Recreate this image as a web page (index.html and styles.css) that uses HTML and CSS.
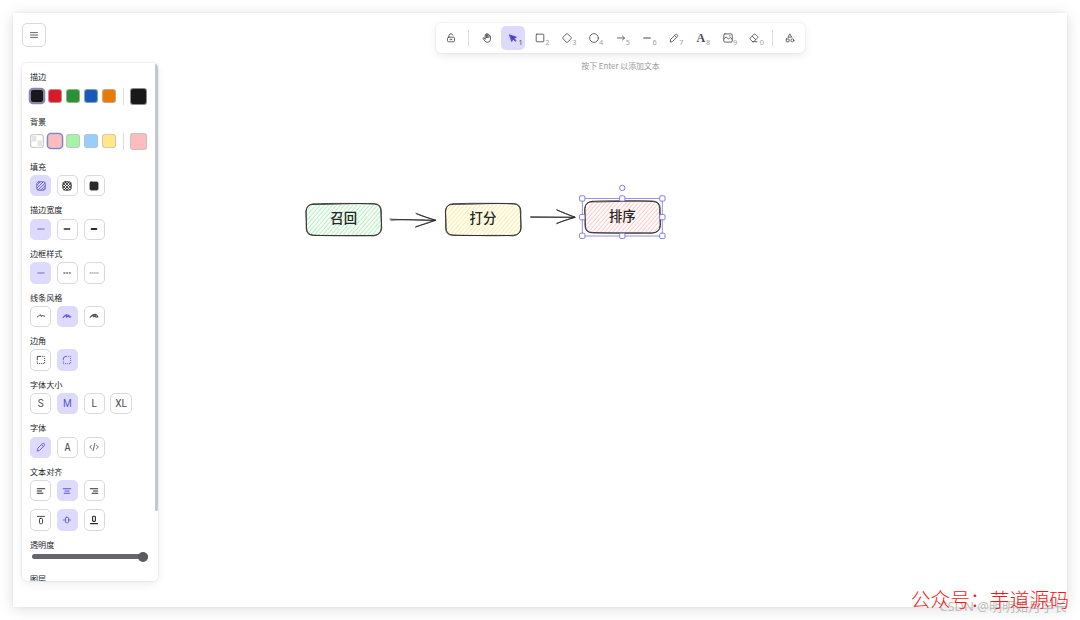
FILE: index.html
```html
<!DOCTYPE html>
<html lang="zh-CN">
<head>
    <meta charset="UTF-8">
    <meta name="viewport" content="width=device-width, initial-scale=1.0">
    <title>Whiteboard</title>
    <link rel="stylesheet" href="styles.css">
</head>
<body>
    <div class="window">
        <svg class="canvas" viewBox="13 13 1054 593">
            <defs>
                <pattern id="hatch-green" width="3.1" height="8" patternUnits="userSpaceOnUse" patternTransform="rotate(41)">
                    <path d="M1 0V8" stroke="#b2f2bb" stroke-width="1.05"/>
                </pattern>
                <pattern id="hatch-yellow" width="3.1" height="8" patternUnits="userSpaceOnUse" patternTransform="rotate(41)">
                    <path d="M1 0V8" stroke="#ffec99" stroke-width="1.05"/>
                </pattern>
                <pattern id="hatch-red" width="3.1" height="8" patternUnits="userSpaceOnUse" patternTransform="rotate(41)">
                    <path d="M1 0V8" stroke="#ffc9c9" stroke-width="1.05"/>
                </pattern>
                <g id="sketch-box">
                    <path d="M8 .8C26 -.1 52 .5 68 .5Q75.5 .6 75.7 8C75.2 14 76 20 75.5 25Q75.3 32 68 32.3C48 33.4 25 32 8 32.4Q.4 32.3 .5 25C.9 18 .2 13 .5 8Q.8 1 8 .8"/>
                    <path d="M7 1.3C24 1.8 50 -.4 69 1.1Q74.8 1.5 75.1 8L76 25Q75.5 31.5 68 32.8C50 31.6 25 33.4 8 32Q1.3 31.8 .9 25L.2 8Q1 1.5 7 1.3"/>
                </g>
            </defs>

            <rect x="307" y="205" width="74" height="30" rx="7" fill="url(#hatch-green)"/>
            <use href="#sketch-box" x="305.7" y="203.1" class="sketch"/>
            <text x="343.7" y="223.4" class="node-text">召回</text>

            <g class="sketch">
                <path d="M390 219.1C405 220.2 420 219.3 435.5 220.5M391 220.2C408 218.9 420 220.8 435 220.2"/>
                <path d="M416 213.4C422 216 429 217.7 435.5 220.5C429 222 422 224.5 415.5 227.2M417 214C424 217 430 218.6 435.8 220C429 223 422 225 416 226.6"/>
            </g>

            <rect x="446" y="205" width="74" height="30" rx="7" fill="url(#hatch-yellow)"/>
            <use href="#sketch-box" x="445.2" y="203" class="sketch"/>
            <text x="483" y="223.4" class="node-text">打分</text>

            <g class="sketch">
                <path d="M530.5 216.8L575 217.4M531 217.3L574.5 217.2"/>
                <path d="M556.5 209.7C562 212.5 569 215 575.3 217.4C569 218.7 562 221 556.7 223.7M557.5 210.3L575 217.2L557 223.2"/>
            </g>

            <rect x="586" y="202" width="74" height="30" rx="7" fill="url(#hatch-red)"/>
            <use href="#sketch-box" x="584.5" y="200.5" class="sketch"/>
            <text x="622.3" y="221.2" class="node-text">排序</text>

            <g class="selection">
                <rect x="582.3" y="198.5" width="80" height="37.5"/>
                <rect class="handle" x="579.6" y="195.8" width="5.3" height="5.3" rx="1.2"/>
                <rect class="handle" x="619.6" y="195.8" width="5.3" height="5.3" rx="1.2"/>
                <rect class="handle" x="659.7" y="195.8" width="5.3" height="5.3" rx="1.2"/>
                <rect class="handle" x="579.6" y="214.5" width="5.3" height="5.3" rx="1.2"/>
                <rect class="handle" x="659.7" y="214.5" width="5.3" height="5.3" rx="1.2"/>
                <rect class="handle" x="579.6" y="233.2" width="5.3" height="5.3" rx="1.2"/>
                <rect class="handle" x="619.6" y="233.2" width="5.3" height="5.3" rx="1.2"/>
                <rect class="handle" x="659.7" y="233.2" width="5.3" height="5.3" rx="1.2"/>
                <circle class="handle" cx="622.3" cy="187.9" r="2.7"/>
            </g>
        </svg>

        <aside class="sidebar">
            <button class="menu-button">
                <svg class="icon" viewBox="0 0 12 12"><path d="M2.5 3.6H9.5M2.5 6H9.5M2.5 8.4H9.5"/></svg>
            </button>

            <div class="panel">
                <section>
                    <h3>描边</h3>
                    <div class="colors">
                        <span class="swatch black active"></span>
                        <span class="swatch red"></span>
                        <span class="swatch green"></span>
                        <span class="swatch blue"></span>
                        <span class="swatch orange"></span>
                        <span class="color-divider"></span>
                        <span class="swatch big black"></span>
                    </div>
                </section>
                <section>
                    <h3>背景</h3>
                    <div class="colors">
                        <span class="swatch transparent"></span>
                        <span class="swatch pink active"></span>
                        <span class="swatch light-green"></span>
                        <span class="swatch light-blue"></span>
                        <span class="swatch yellow"></span>
                        <span class="color-divider"></span>
                        <span class="swatch big pink"></span>
                    </div>
                </section>
                <section>
                    <h3>填充</h3>
                    <div class="options">
                        <button class="active"><svg class="icon" viewBox="0 0 12 12"><rect x="1.8" y="1.8" width="8.4" height="8.4" rx="2"/><path d="M2 5.2L5.2 2M2 8L8 2M3 10L10 3M5.8 10L10 5.8M8.2 10L10 8.2"/></svg></button>
                        <button><svg class="icon dark" viewBox="0 0 12 12"><rect x="1.8" y="1.8" width="8.4" height="8.4" rx="2.4"/><path d="M2 5.2L5.2 2M2 8L8 2M3 10L10 3M5.8 10L10 5.8M6.8 2L10 5.2M4 2L10 8M2 3L9 10M2 5.8L6.2 10"/></svg></button>
                        <button><svg class="icon dark" viewBox="0 0 12 12"><rect class="solid" x="2" y="2" width="8" height="8" rx="1"/></svg></button>
                    </div>
                </section>
                <section>
                    <h3>描边宽度</h3>
                    <div class="options">
                        <button class="active"><svg class="icon" viewBox="0 0 12 12"><path d="M2.8 6H9.2"/></svg></button>
                        <button><svg class="icon dark" viewBox="0 0 12 12"><path class="medium" d="M3.3 6H8.7"/></svg></button>
                        <button><svg class="icon dark" viewBox="0 0 12 12"><path class="thick" d="M3.6 6H8.4"/></svg></button>
                    </div>
                </section>
                <section>
                    <h3>边框样式</h3>
                    <div class="options">
                        <button class="active"><svg class="icon" viewBox="0 0 12 12"><path d="M2.8 6H9.2"/></svg></button>
                        <button><svg class="icon dark" viewBox="0 0 12 12"><path class="dashed" d="M2.4 6H9.8"/></svg></button>
                        <button><svg class="icon dark" viewBox="0 0 12 12"><path class="dotted" d="M1.8 6H10.4"/></svg></button>
                    </div>
                </section>
                <section>
                    <h3>线条风格</h3>
                    <div class="options">
                        <button><svg class="icon dark" viewBox="0 0 12 12"><path d="M2.2 7Q5 4.6 5.9 4.9Q6.2 5.3 5.7 6.1Q6.2 6.9 7.8 5.5Q8.4 6 9.8 6.2"/></svg></button>
                        <button class="active"><svg class="icon" viewBox="0 0 12 12"><path class="rough" d="M2.2 7.3Q5.3 4.2 6 4.7Q6.2 5.3 5.3 7Q6 7.5 8 5.2Q7.8 6.9 8.4 7.2L9.9 6.8"/></svg></button>
                        <button><svg class="icon" viewBox="0 0 12 12"><path class="rough" d="M2.2 7.2Q5 4 7.2 4.4Q9.4 4.8 9.8 7M4.6 5.8L6 5.5L5.7 6.8L7.5 5.8L7.9 7.2L9.8 7"/></svg></button>
                    </div>
                </section>
                <section>
                    <h3>边角</h3>
                    <div class="options">
                        <button><svg class="icon dark" viewBox="0 0 12 12"><path d="M2.3 5.8V2.4H5.8"/><path class="dots" d="M7.6 2.4H9.6V9.6H2.3V7.4"/></svg></button>
                        <button class="active"><svg class="icon" viewBox="0 0 12 12"><path d="M2.3 5.8V5Q2.3 2.4 5 2.4H5.8"/><path class="dots" d="M7.6 2.4H9.6V9.6H2.3V7.4"/></svg></button>
                    </div>
                </section>
                <section>
                    <h3>字体大小</h3>
                    <div class="options">
                        <button>S</button>
                        <button class="active">M</button>
                        <button>L</button>
                        <button>XL</button>
                    </div>
                </section>
                <section>
                    <h3>字体</h3>
                    <div class="options">
                        <button class="active"><svg class="icon" viewBox="0 0 12 12"><path d="M2.3 9.8L2.7 7.4L7.3 2.7Q8.3 1.8 9.2 2.7Q10.1 3.6 9.2 4.6L4.6 9.3ZM6.6 3.5L8.5 5.4"/></svg></button>
                        <button class="font-a">A</button>
                        <button><svg class="icon" viewBox="0 0 12 12"><path d="M3.5 4.3L1.7 6L3.5 7.8M8.5 4.3L10.3 6L8.5 7.8M6.9 2.4L5.1 9.6"/></svg></button>
                    </div>
                </section>
                <section>
                    <h3>文本对齐</h3>
                    <div class="options">
                        <button><svg class="icon dark" viewBox="0 0 12 12"><path class="line" d="M2.3 3.8H9.7M2.3 6H6.5M2.3 8.2H7.9"/></svg></button>
                        <button class="active"><svg class="icon" viewBox="0 0 12 12"><path class="line" d="M2.3 3.8H9.7M4 6H8M3.2 8.2H8.8"/></svg></button>
                        <button><svg class="icon dark" viewBox="0 0 12 12"><path class="line" d="M2.3 3.8H9.7M5.5 6H9.7M4.1 8.2H9.7"/></svg></button>
                    </div>
                    <div class="options">
                        <button><svg class="icon dark" viewBox="0 0 12 12"><path d="M2.4 2.4H9.6"/><rect x="4.5" y="4.4" width="3" height="5.2" rx=".8"/></svg></button>
                        <button class="active"><svg class="icon" viewBox="0 0 12 12"><path d="M2.3 6H4.4M7.6 6H9.7"/><rect x="4.5" y="3.3" width="3" height="5.4" rx=".8"/></svg></button>
                        <button><svg class="icon dark" viewBox="0 0 12 12"><path class="line" d="M2.4 9.6H9.6"/><rect class="line" x="4.6" y="2.2" width="2.8" height="5.2" rx=".8"/></svg></button>
                    </div>
                </section>
                <section>
                    <h3>透明度</h3>
                    <div class="slider"><span class="thumb"></span></div>
                </section>
                <section>
                    <h3>图层</h3>
                </section>
                <span class="scrollbar"></span>
            </div>
        </aside>

        <main>
            <div class="toolbar">
                <button><svg class="icon" viewBox="0 0 12 12"><rect x="2.5" y="5.2" width="7" height="4.6" rx="1.1"/><path d="M4 5.2V3.6Q4 1.8 6 1.8Q7.4 1.8 7.8 3"/><circle cx="6" cy="7.5" r=".6"/></svg></button>
                <span class="divider"></span>
                <button><svg class="icon" viewBox="0 0 12 12"><path d="M4.1 7V3.1Q4.1 2.4 4.7 2.4T5.3 3.1V5.6M5.3 5.5V2.1Q5.3 1.4 5.9 1.4T6.6 2.1V5.6M6.6 2.9Q6.7 2.2 7.3 2.2T7.9 2.9V5.8M7.9 4.1Q8 3.4 8.6 3.4T9.5 4.1V7.2Q9.5 10.3 6.8 10.3Q4.8 10.3 3.9 9.1L2.1 6.5Q2 5.6 2.9 5.7L4.1 7"/></svg></button>
                <button class="active"><svg class="icon" viewBox="0 0 12 12"><path class="solid" d="M2.7 2.9L9.4 5.2L6.9 6.3L9 8.5L8.3 9.2L6.1 7L4.9 9.3Z"/></svg><sub>1</sub></button>
                <button><svg class="icon" viewBox="0 0 12 12"><rect x="2.2" y="2.2" width="7.6" height="7.6" rx=".6"/></svg><sub>2</sub></button>
                <button><svg class="icon" viewBox="0 0 12 12"><path d="M5.4 1.9Q6 1.3 6.6 1.9L10.2 5.4Q10.7 6 10.2 6.6L6.6 10.1Q6 10.7 5.4 10.1L1.8 6.6Q1.3 6 1.8 5.4Z"/></svg><sub>3</sub></button>
                <button><svg class="icon" viewBox="0 0 12 12"><circle cx="6" cy="6" r="4.4"/></svg><sub>4</sub></button>
                <button><svg class="icon" viewBox="0 0 12 12"><path d="M2.5 6H9.4M7.4 4L9.5 6L7.4 8"/></svg><sub>5</sub></button>
                <button><svg class="icon" viewBox="0 0 12 12"><path class="line" d="M2.6 6H9.4"/></svg><sub>6</sub></button>
                <button><svg class="icon" viewBox="0 0 12 12"><path d="M2.3 9.8L2.7 7.4L7.3 2.7Q8.3 1.8 9.2 2.7Q10.1 3.6 9.2 4.6L4.6 9.3ZM6.6 3.5L8.5 5.4"/></svg><sub>7</sub></button>
                <button><span class="text-tool">A</span><sub>8</sub></button>
                <button><svg class="icon" viewBox="0 0 12 12"><rect x="1.8" y="1.9" width="8.4" height="8.2" rx="1.1"/><path d="M1.9 6.8L4.2 4.8L6.4 7.1L8.3 5.6L10.1 7.2M7.6 3.9H8"/></svg><sub>9</sub></button>
                <button><svg class="icon" viewBox="0 0 12 12"><path d="M4.5 9.6L2.1 7.2Q1.7 6.7 2.1 6.2L6.2 2.2Q6.7 1.8 7.2 2.2L9.7 4.7Q10.1 5.2 9.7 5.7L5.8 9.6ZM4.2 4.2L7.7 7.7M4.5 9.7H9"/></svg><sub>0</sub></button>
                <span class="divider"></span>
                <button><svg class="icon" viewBox="0 0 12 12"><path d="M6 2.2L7.7 5.2H4.3Z"/><rect x="2.3" y="7" width="2.8" height="2.8" rx=".3"/><circle cx="8.4" cy="8.4" r="1.5"/></svg></button>
            </div>
            <p class="hint">按下 Enter 以添加文本</p>
        </main>
    </div>

    <div class="watermark">CSDN @明明如月学长</div>
    <div class="account">公众号：芋道源码</div>
</body>
</html>
```
FILE: styles.css
```css
* {
    box-sizing: border-box;
}

body, h3, p, button {
    margin: 0;
    padding: 0;
}

body {
    height: 620px;
    padding: 13px;
    overflow: hidden;
    background-color: #fff;
    color: #1b1b1f;
    font-family: "Noto Sans", "Noto Sans CJK SC", sans-serif;
}

.window {
    position: relative;
    display: flex;
    width: 1054px;
    height: 593.5px;
    background-color: #fff;
    box-shadow: 0 0 3px rgba(0, 0, 0, 0.06), 0 2px 14px rgba(0, 0, 0, 0.13);
}

button {
    display: flex;
    align-items: center;
    justify-content: center;
    border: none;
    background-color: #fff;
    color: #4d4d52;
    font-family: inherit;
}

.icon {
    display: block;
    flex: none;
    width: 12px;
    height: 12px;
    fill: none;
    stroke: currentColor;
    stroke-width: 0.85;
    stroke-linecap: round;
    stroke-linejoin: round;
}

.icon.dark {
    color: #2b2b2f;
}

.icon .solid {
    fill: currentColor;
}

.icon .line {
    stroke-width: 1.1;
}

.icon .medium {
    stroke-width: 1.4;
}

.icon .thick {
    stroke-width: 2;
}

.icon .dashed {
    stroke-width: 1.1;
    stroke-linecap: butt;
    stroke-dasharray: 2 0.8;
}

.icon .dotted {
    stroke-linecap: butt;
    stroke-dasharray: 1 0.9;
}

.icon .rough {
    stroke-width: 1.15;
}

.icon .dots {
    stroke-dasharray: 0.3 1.7;
}

/* canvas */
.canvas {
    position: absolute;
    inset: 0;
    width: 1054px;
    height: 593px;
}

.sketch {
    fill: none;
    stroke: #2a2a2a;
    stroke-width: 0.85;
    stroke-linecap: round;
}

.node-text {
    fill: #262626;
    font-size: 13.4px;
    font-weight: 500;
    text-anchor: middle;
}

.selection rect {
    fill: none;
    stroke: #8a86e0;
    stroke-width: 0.9;
}

.selection .handle {
    fill: #fff;
    stroke: #7771dd;
    stroke-width: 0.9;
}

/* sidebar */
.sidebar {
    position: relative;
    width: 161px;
    padding: 9.5px 0 0 9px;
}

.menu-button {
    width: 24px;
    height: 24.5px;
    border: 1px solid #d9d9dc;
    border-radius: 5px;
}

.panel {
    position: relative;
    width: 136px;
    height: 518px;
    margin-top: 16px;
    padding: 7.8px 8px 0;
    overflow: hidden;
    border-radius: 5px;
    background-color: #fff;
}

.sidebar::before {
    content: "";
    position: absolute;
    top: 50px;
    left: 9px;
    width: 136px;
    height: 518px;
    border-radius: 5px;
    box-shadow: 0 0 2px rgba(0, 0, 0, 0.16), 0 3px 10px rgba(0, 0, 0, 0.07);
}

.panel section {
    margin-bottom: 8px;
}

.panel h3 {
    height: 12px;
    margin-bottom: 2.4px;
    font-size: 8.1px;
    font-weight: 400;
    line-height: 12px;
}

.colors {
    display: flex;
    align-items: center;
    gap: 4px;
    height: 22.6px;
}

.swatch {
    flex: none;
    width: 14px;
    height: 14px;
    border: 1px solid rgba(190, 190, 190, 0.7);
    border-radius: 3px;
}

.swatch:first-child {
    margin-left: 0.3px;
}

.swatch.active {
    box-shadow: 0 0 0 1.3px #8682c9;
}

.swatch.big {
    width: 17px;
    height: 17px;
}

.color-divider {
    width: 1px;
    height: 17px;
    margin: 0 1.8px 0 3px;
    background-color: #dcdcdf;
}

.black { background-color: #181818; }
.red { background-color: #d81b27; }
.green { background-color: #2a9134; }
.blue { background-color: #185abc; }
.orange { background-color: #ea7905; }
.pink { background-color: #ffbcbe; }
.light-green { background-color: #a6f2ab; }
.light-blue { background-color: #99ceff; }
.yellow { background-color: #ffe885; }

.transparent {
    background: repeating-conic-gradient(#fff 0 25%, #e5e5e5 0 50%) 50% 50% / 11px 11px;
}

.options {
    display: flex;
    gap: 5.4px;
}

.options + .options {
    margin-top: 8px;
}

.options button {
    width: 21.4px;
    height: 21.2px;
    border: 1px solid #d9d9dc;
    border-radius: 5px;
    font-family: Roboto, sans-serif;
    font-size: 10px;
}

.options button.active,
.toolbar button.active {
    border-color: #dedafd;
    background-color: #dedafd;
    color: #5a52d5;
}

.options .font-a {
    font-family: "DejaVu Sans Mono", monospace;
    font-size: 10px;
}

.slider {
    display: flex;
    align-items: center;
    justify-content: flex-end;
    width: 116px;
    height: 5.6px;
    margin: 3.2px 0 13.6px 2px;
    border-radius: 3px;
    background-color: #66666a;
}

.thumb {
    width: 10px;
    height: 10px;
    border-radius: 50%;
    background-color: #5c5c60;
}

.scrollbar {
    position: absolute;
    top: 0;
    right: 0;
    width: 3px;
    height: 448px;
    border-radius: 2px;
    background-color: #c2c8d2;
}

/* top toolbar */
main {
    position: relative;
    display: flex;
    flex: 1;
    flex-direction: column;
    align-items: center;
    padding-top: 9.6px;
}

.toolbar {
    display: flex;
    align-items: center;
    gap: 2.8px;
    height: 30px;
    padding: 0 3px;
    border-radius: 5px;
    background-color: #fff;
    box-shadow: 0 0 2px rgba(0, 0, 0, 0.12), 0 3px 9px rgba(0, 0, 0, 0.08);
}

.toolbar button {
    position: relative;
    width: 24px;
    height: 24px;
    border-radius: 5px;
}

.toolbar button.active {
    color: #4a42c8;
}

.toolbar sub {
    position: absolute;
    right: 2.6px;
    bottom: 4px;
    color: #a0a0a5;
    font-size: 7.3px;
    line-height: 8px;
}

.toolbar .active sub {
    color: #55555a;
}

.text-tool {
    font-family: "Liberation Serif", serif;
    font-size: 12px;
    font-weight: 700;
    line-height: 12px;
}

.divider {
    width: 1px;
    height: 16px;
    margin: 0 2.6px;
    background-color: #dcdcdf;
}

.hint {
    margin-top: 7.2px;
    color: #98989c;
    font-family: "Noto Sans CJK SC", sans-serif;
    font-size: 7.9px;
    line-height: 12px;
}

/* overlaid marks */
.watermark,
.account {
    position: absolute;
    white-space: nowrap;
}

.watermark {
    top: 596px;
    right: 13px;
    color: #bcbcbc;
    font-size: 13px;
    line-height: 20px;
}

.account {
    top: 585px;
    right: 11px;
    color: #fa1414;
    font-family: "Noto Sans CJK SC", sans-serif;
    font-size: 19.8px;
    font-weight: 300;
    line-height: 28px;
}
```
